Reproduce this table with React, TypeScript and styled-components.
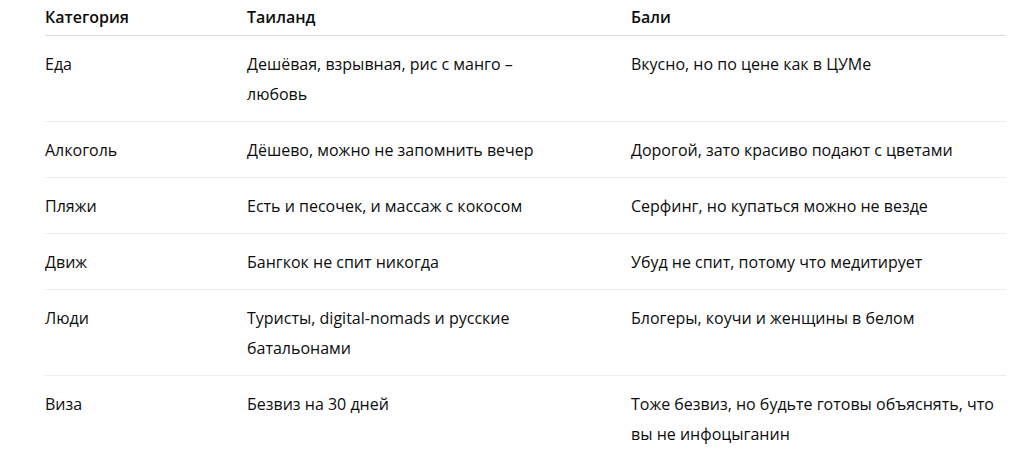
import styled, { createGlobalStyle } from "styled-components";

const rows = [
    { category: "Еда", thai: "Дешёвая, взрывная, рис с манго – любовь", bali: "Вкусно, но по цене как в ЦУМе" },
    { category: "Алкоголь", thai: "Дёшево, можно не запомнить вечер", bali: "Дорогой, зато красиво подают с цветами" },
    { category: "Пляжи", thai: "Есть и песочек, и массаж с кокосом", bali: "Серфинг, но купаться можно не везде" },
    { category: "Движ", thai: "Бангкок не спит никогда", bali: "Убуд не спит, потому что медитирует" },
    { category: "Люди", thai: "Туристы, digital-nomads и русские батальонами", bali: "Блогеры, коучи и женщины в белом" },
    { category: "Виза", thai: "Безвиз на 30 дней", bali: "Тоже безвиз, но будьте готовы объяснять, что вы не инфоцыганин" },
];

export default function App() {
    return (
        <>
            <GlobalStyle />
            <Page>
                <Table>
                    <colgroup>
                        <col style={{ width: 202 }} />
                        <col style={{ width: 384 }} />
                        <col style={{ width: 375 }} />
                    </colgroup>
                    <thead>
                        <tr>
                            <HeadCell>Категория</HeadCell>
                            <HeadCell>Таиланд</HeadCell>
                            <HeadCell>Бали</HeadCell>
                        </tr>
                    </thead>
                    <tbody>
                        {rows.map((row, i) => (
                            <Row key={row.category} $last={i === rows.length - 1}>
                                <Cell>{row.category}</Cell>
                                <Cell>{row.thai}</Cell>
                                <Cell>{row.bali}</Cell>
                            </Row>
                        ))}
                    </tbody>
                </Table>
            </Page>
        </>
    );
}

const GlobalStyle = createGlobalStyle`
    html, body {
        margin: 0;
        background: #ffffff;
    }
    body {
        font-family: "Open Sans", "Noto Sans", sans-serif;
        color: #0d0d0d;
    }
`;

const Page = styled.div`
    padding: 0 30px 0 45px;
`;

const Table = styled.table`
    width: 961px;
    table-layout: fixed;
    border-collapse: collapse;
    font-size: 16px;
`;

const HeadCell = styled.th`
    text-align: left;
    font-weight: 600;
    line-height: 28px;
    padding: 3px 74px 4px 0;
    border-bottom: 1px solid #d9d9d9;
    &:last-child {
        padding-right: 0;
    }
`;

const Row = styled.tr<{ $last: boolean }>`
    border-bottom: ${({ $last }) => ($last ? "none" : "1px solid #ececec")};
`;

const Cell = styled.td`
    vertical-align: top;
    line-height: 30px;
    padding: 13px 74px 12px 0;
    &:last-child {
        padding-right: 0;
    }
`;
